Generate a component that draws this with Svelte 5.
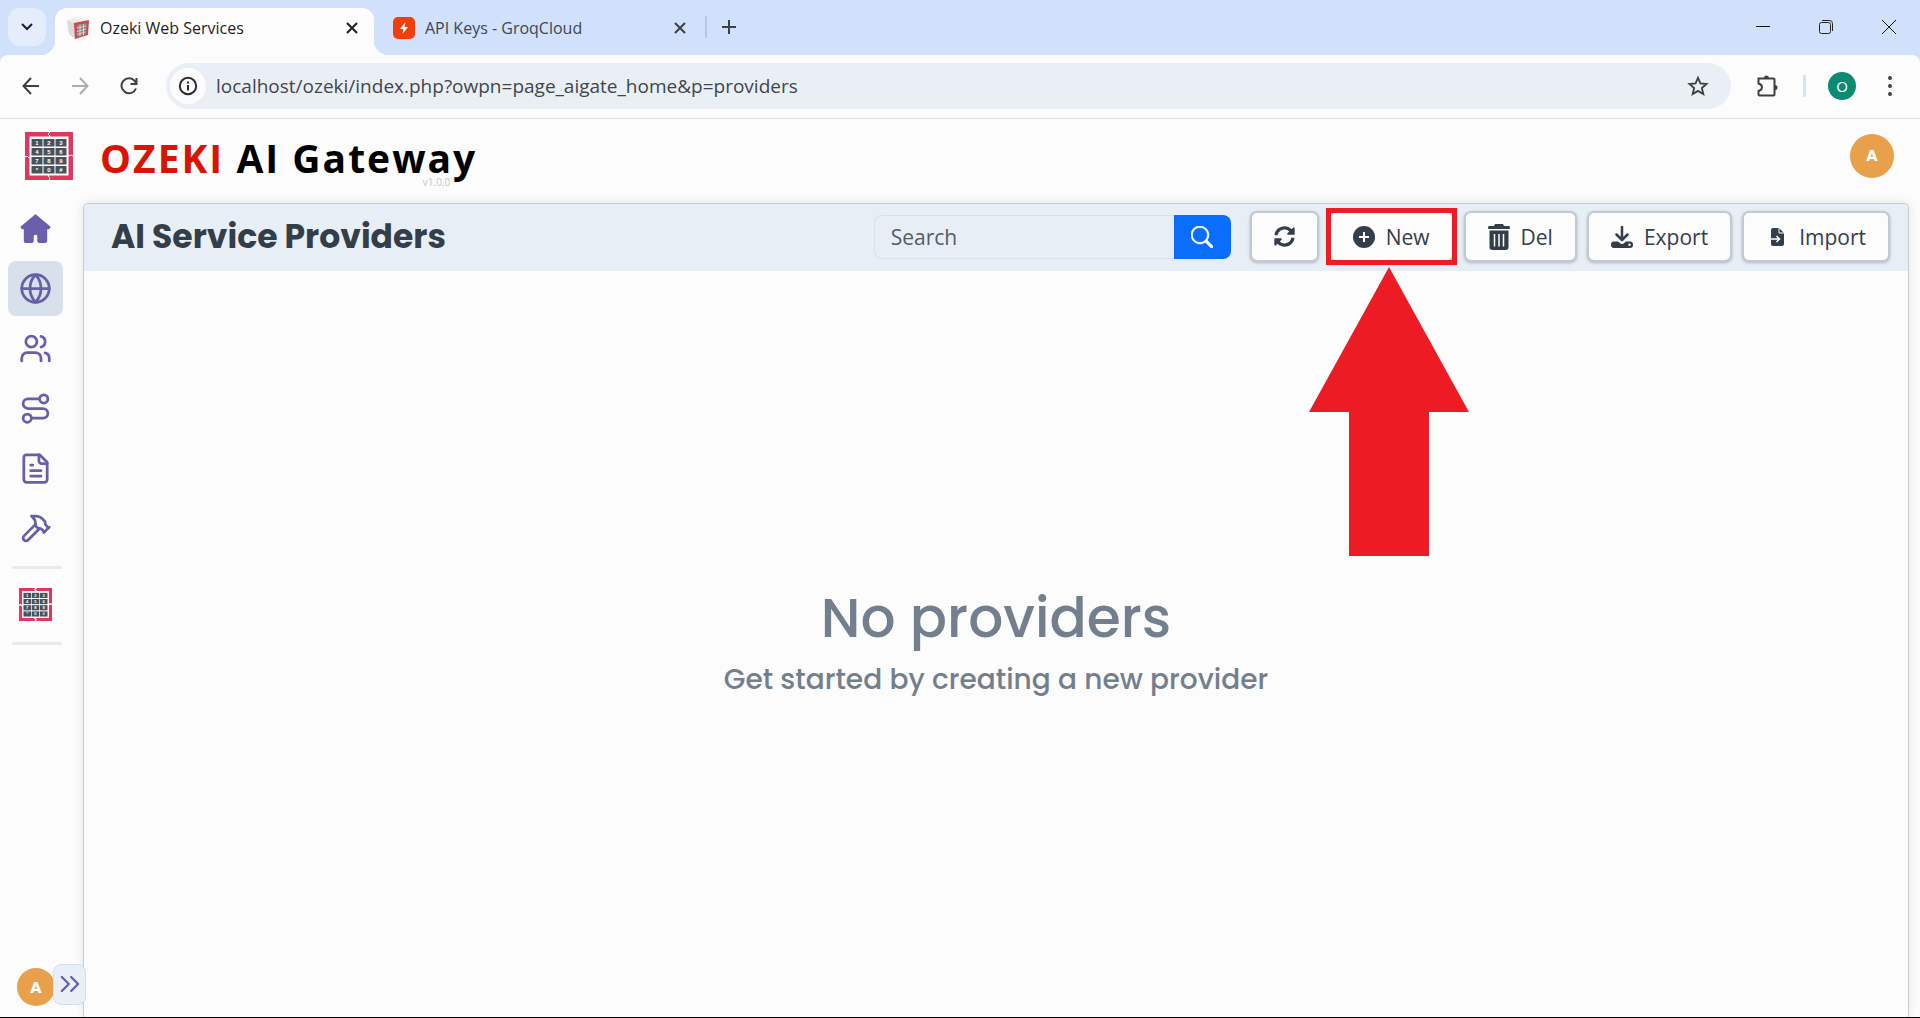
<script lang="ts">
	type NavItem = { name: string; label: string; paths: string[]; circles?: number[][]; solid?: boolean };

	let search = $state("");
	let active = $state("providers");

	const navItems: NavItem[] = [
		{
			name: "home",
			label: "Home",
			solid: true,
			paths: ["M12 2.2 1.6 10.9 2.2 12H4v9q0 1 1 1h4.2q1 0 1-1v-3.6q0-1.4 1.8-1.4t1.8 1.4V21q0 1 1 1H19q1 0 1-1v-9h1.8l.6-1.1z"]
		},
		{
			name: "providers",
			label: "Providers",
			circles: [[12, 12, 10]],
			paths: ["M12 2a14.5 14.5 0 0 0 0 20 14.5 14.5 0 0 0 0-20", "M2 12h20"]
		},
		{
			name: "users",
			label: "Users",
			circles: [[9, 7, 4]],
			paths: ["M16 21v-2a4 4 0 0 0-4-4H6a4 4 0 0 0-4 4v2", "M22 21v-2a4 4 0 0 0-3-3.87", "M16 3.13a4 4 0 0 1 0 7.75"]
		},
		{
			name: "routes",
			label: "Routes",
			circles: [[6, 19, 3], [18, 5, 3]],
			paths: ["M9 19h8.5a3.5 3.5 0 0 0 0-7h-11a3.5 3.5 0 0 1 0-7H15"]
		},
		{
			name: "logs",
			label: "Logs",
			paths: ["M15 2H5.5a2 2 0 0 0-2 2v16a2 2 0 0 0 2 2h13a2 2 0 0 0 2-2V7.5Z", "M14.5 2v4.5a2 2 0 0 0 2 2h4", "M10 9.5H8.500", "M16 13.5H8.500", "M16 17.5H8.500"]
		},
		{
			name: "tools",
			label: "Tools",
			paths: [
				"m15 12-8.373 8.373a1 1 0 1 1-3-3L12 9",
				"m18 15 4-4",
				"m21.5 11.5-1.914-1.914A2 2 0 0 1 19 8.172V7l-2.26-2.26a6 6 0 0 0-4.202-1.756L9 2.96l.92.82A6.18 6.18 0 0 1 12 8.4V10l2 2h1.172a2 2 0 0 1 1.414.586L18.5 14.5"
			]
		}
	];

	const keys = ["1", "2", "3", "4", "5", "6", "7", "8", "9", "*", "0", "#"];
</script>

{#snippet keypad()}
	<svg class="keypad" viewBox="0 0 48 48" aria-hidden="true">
		<rect width="48" height="48" fill="#e0375c" />
		<rect x="4.5" y="4.5" width="39" height="39" fill="#fff" />
		<path d="M25 0l-2 2 2 2-1 1M24 48l1-2-2-2 1-1M0 25l2-1 2 2 1-1M48 24l-2-1-2 1-1-1" fill="none" stroke="#fff" />
		{#each keys as key, i}
			<rect x={6.5 + (i % 3) * 12} y={7 + Math.floor(i / 3) * 9} width="11" height="7.5" fill="#46525e" />
			<text x={12 + (i % 3) * 12} y={12.8 + Math.floor(i / 3) * 9} text-anchor="middle">{key}</text>
		{/each}
	</svg>
{/snippet}

<div class="window">
	<div class="chrome">
		<div class="tab-strip">
			<button class="tab-search" aria-label="Search tabs">
				<svg width="12" height="8" viewBox="0 0 12 8"><path d="m1 1 5 5 5-5" fill="none" stroke="#1f1f1f" stroke-width="2" /></svg>
			</button>
			<div class="tab current">
				<svg width="24" height="24" viewBox="0 0 24 24">
					<path d="M1 4 11 1l12 3-13 3z" fill="#f1efee" />
					<path d="m1 4 8 3v16L3 18z" fill="#dcd9d8" />
					<path d="m8 7 15-3-1 15-13 4z" fill="#d64545" />
					<path d="m10.5 9 10.500-2-1 11-9 3z" fill="#8d8583" />
					<path d="M14 8.500v12M17.500 8v11.500M11 12l9.500-2M11 15.500l9-2.500M11 18.500l8.500-2.500" stroke="#d9cdcb" />
				</svg>
				<span>Ozeki Web Services</span>
				<button aria-label="Close tab">
					<svg width="12" height="12" viewBox="0 0 12 12"><path d="m1 1 10 10M11 1 1 11" stroke="#1f1f1f" stroke-width="2" /></svg>
				</button>
			</div>
			<div class="tab">
				<svg width="22" height="22" viewBox="0 0 22 22">
					<rect width="22" height="22" rx="5" fill="#f43e09" />
					<path d="m12.5 5-5.500 7h3.500l-1 5 5.500-7h-3.500z" fill="#fff" />
				</svg>
				<span>API Keys - GroqCloud</span>
				<button aria-label="Close tab">
					<svg width="12" height="12" viewBox="0 0 12 12"><path d="m1 1 10 10M11 1 1 11" stroke="#3c4043" stroke-width="2" /></svg>
				</button>
			</div>
			<button class="new-tab" aria-label="New tab">
				<svg width="14" height="14" viewBox="0 0 14 14"><path d="M7 0v14M0 7h14" stroke="#3c4043" stroke-width="2" /></svg>
			</button>
			<div class="window-buttons">
				<button aria-label="Minimize">
					<svg width="16" height="16" viewBox="0 0 16 16"><path d="M1 7.5h14" stroke="#111" /></svg>
				</button>
				<button aria-label="Restore">
					<svg width="16" height="16" viewBox="0 0 16 16" fill="none" stroke="#222">
						<rect x="1.5" y="3.5" width="11" height="11" rx="2" />
						<path d="M4 1.5h7.5q3 0 3 3V12" />
					</svg>
				</button>
				<button aria-label="Close">
					<svg width="16" height="16" viewBox="0 0 16 16"><path d="m1 1 14 14M15 1 1 15" stroke="#111" /></svg>
				</button>
			</div>
		</div>

		<div class="toolbar">
			<button aria-label="Back">
				<svg width="18" height="18" viewBox="0 0 18 18" fill="none" stroke="#3c4043" stroke-width="2"><path d="M17 9H2M9 1 1.5 9 9 17" /></svg>
			</button>
			<button aria-label="Forward">
				<svg width="18" height="18" viewBox="0 0 18 18" fill="none" stroke="#a9acb0" stroke-width="2"><path d="M1 9h15M9 1l7.5 8L9 17" /></svg>
			</button>
			<button aria-label="Reload">
				<svg width="18" height="18" viewBox="0 0 18 18" fill="none" stroke="#3c4043" stroke-width="2"><path d="M16 11.5A7.5 7.5 0 1 1 14.8 4L16 6M16.5 1v6H10.5" /></svg>
			</button>
			<div class="address">
				<button class="site-info" aria-label="View site information">
					<svg width="20" height="20" viewBox="0 0 20 20" fill="none" stroke="#2a2c2e" stroke-width="2"><circle cx="10" cy="10" r="8.2" /><path d="M10 9v5.5M10 5.5v2" /></svg>
				</button>
				<input type="text" aria-label="Address" value="localhost/ozeki/index.php?owpn=page_aigate_home&p=providers" />
				<button aria-label="Bookmark this tab">
					<svg width="22" height="22" viewBox="0 0 24 24" fill="none" stroke="#3c4043" stroke-width="2"><path d="m12 3 2.6 6.2 6.7.6-5.1 4.4 1.6 6.6L12 17.3l-5.8 3.5 1.6-6.6-5.1-4.4 6.7-.6z" /></svg>
				</button>
			</div>
			<button class="extensions" aria-label="Extensions">
				<svg width="24" height="24" viewBox="0 0 24 24" fill="none" stroke="#3c4043" stroke-width="2"><path d="M3.5 4.5h15q1 0 1 1v15q0 1-1 1h-14q-1 0-1-1V17q3.5-1 3.5-3.7T3.5 9.5z" /><path d="M9 4a2.5 2.5 0 0 1 5 0zM20 11a2.5 2.5 0 0 1 0 5z" fill="#3c4043" stroke="none" /></svg>
			</button>
			<button class="profile" aria-label="Profile">O</button>
			<button aria-label="Browser menu">
				<svg width="4" height="20" viewBox="0 0 4 20" fill="#3c4043"><circle cx="2" cy="2" r="2" /><circle cx="2" cy="10" r="2" /><circle cx="2" cy="18" r="2" /></svg>
			</button>
		</div>
	</div>

	<header>
		{@render keypad()}
		<h1><span class="brand">OZEKI</span> AI Gateway<small>v1.0.0</small></h1>
		<button class="avatar" aria-label="Account">A</button>
	</header>

	<div class="body">
		<nav>
			{#each navItems as item}
				<a href="#{item.name}" aria-label={item.label} class:active={active === item.name} onclick={() => (active = item.name)}>
					<svg width="33" height="33" viewBox="0 0 24 24" class:solid={item.solid}>
						{#each item.circles ?? [] as [cx, cy, r]}
							<circle {cx} {cy} {r} />
						{/each}
						{#each item.paths as d}
							<path {d} />
						{/each}
					</svg>
				</a>
			{/each}
			<hr />
			<a href="#ozeki" aria-label="Ozeki">{@render keypad()}</a>
			<hr />
			<div class="nav-bottom">
				<button class="avatar small" aria-label="Account">A</button>
				<button class="expand" aria-label="Expand sidebar">
					<svg width="28" height="28" viewBox="0 0 24 24"><path d="m5 18 6-6-6-6M13 18l6-6-6-6" /></svg>
				</button>
			</div>
		</nav>

		<main>
			<div class="panel-head">
				<h2>AI Service Providers</h2>
				<form class="search" onsubmit={(e) => e.preventDefault()}>
					<input type="text" placeholder="Search" aria-label="Search" bind:value={search} />
					<button aria-label="Search">
						<svg width="22" height="22" viewBox="0 0 16 16" fill="#fff" stroke="#fff" stroke-width="0.5"><path d="M11.742 10.344a6.5 6.5 0 1 0-1.397 1.398h-.001c.03.04.062.078.098.115l3.85 3.85a1 1 0 0 0 1.415-1.414l-3.85-3.85a1.007 1.007 0 0 0-.115-.1zM12 6.5a5.5 5.5 0 1 1-11 0 5.5 5.5 0 0 1 11 0z" /></svg>
					</button>
				</form>
				<div class="actions">
					<button class="action" aria-label="Refresh">
						<svg width="21" height="21" viewBox="0 0 512 512"><path d="M370.72 133.28C339.458 104.008 298.888 87.962 255.848 88c-77.458.068-144.328 53.178-162.791 126.85-1.344 5.363-6.122 9.15-11.651 9.15H24.103c-7.498 0-13.194-6.807-11.807-14.176C33.933 94.924 134.813 8 256 8c66.448 0 126.791 26.136 171.315 68.685L463.03 40.97C478.149 25.851 504 36.559 504 57.941V192c0 13.255-10.745 24-24 24H345.941c-21.382 0-32.09-25.851-16.971-40.971l41.75-41.749zM32 296h134.059c21.382 0 32.09 25.851 16.971 40.971l-41.75 41.75c31.262 29.273 71.835 45.319 114.876 45.28 77.418-.07 144.315-53.144 162.787-126.849 1.344-5.363 6.122-9.15 11.651-9.15h57.304c7.498 0 13.194 6.807 11.807 14.176C478.067 417.076 377.187 504 256 504c-66.448 0-126.791-26.136-171.315-68.685L48.97 471.03C33.851 486.149 8 475.441 8 454.059V320c0-13.255 10.745-24 24-24z" /></svg>
					</button>
					<div class="marked">
						<button class="action">
							<svg width="22" height="22" viewBox="0 0 22 22"><circle cx="11" cy="11" r="11" /><path d="M11 6v10M6 11h10" stroke="#fff" stroke-width="2" /></svg>
							New
						</button>
						<svg class="arrow" width="160" height="289" viewBox="0 0 160 289" aria-hidden="true"><path d="M80 0 160 145H120V289H40V145H0z" fill="#ed1c24" /></svg>
					</div>
					<button class="action">
						<svg width="22" height="26" viewBox="0 0 22 26">
							<path d="M7 0h8l1 2h5q1 0 1 1.5T21 5H1Q0 5 0 3.5T1 2h5zM1.5 6.5h19V23q0 3-3 3h-13q-3 0-3-3z" />
							<path d="M6.5 10v12.5M11 10v12.5M15.5 10v12.5" stroke="#fff" stroke-width="1.5" />
						</svg>
						Del
					</button>
					<button class="action">
						<svg width="22" height="22" viewBox="0 0 22 22">
							<path d="M11 1v12M5.5 8.500l5.500 5.500 5.500-5.500" fill="none" stroke="#343e48" stroke-width="2.500" stroke-linecap="round" stroke-linejoin="round" />
							<path d="M3 15.500h4l2.500 2q1.500 1 3 0l2.500-2H19a3 3 0 0 1 3 3v.5a3 3 0 0 1-3 3H3a3 3 0 0 1-3-3v-.5a3 3 0 0 1 3-3z" />
							<circle cx="18.5" cy="18.7" r="1.2" fill="#fff" />
						</svg>
						Export
					</button>
					<button class="action">
						<svg width="22" height="18" viewBox="0 0 22 18">
							<path d="M7 0h6l5 5v11q0 2-2 2H7q-2 0-2-2V2q0-2 2-2z" />
							<path d="M13 0v5h5" fill="none" stroke="#fff" />
							<path d="M4 11h9M10.5 8l3 3-3 3" fill="none" stroke="#fff" stroke-width="1.5" />
						</svg>
						Import
					</button>
				</div>
			</div>
			<div class="empty">
				<h3>No providers</h3>
				<p>Get started by creating a new provider</p>
			</div>
		</main>
	</div>
</div>

<style>
	:global(body) {
		background: #fcfdfd;
	}
	* {
		box-sizing: border-box;
	}
	.window {
		display: flex;
		flex-direction: column;
		min-height: 100vh;
		border-bottom: 1px solid #000;
		background: #fcfcfd;
		font-family: "Segoe UI", "Open Sans", sans-serif;
		color: #343e48;
	}
	button {
		display: flex;
		align-items: center;
		justify-content: center;
		padding: 0;
		border: none;
		background: none;
		font: inherit;
		color: inherit;
		cursor: pointer;
	}
	input {
		min-width: 0;
		border: none;
		outline: none;
		background: none;
		font: inherit;
	}
	svg {
		display: block;
		flex: none;
	}
	h1,
	h2,
	h3,
	p {
		margin: 0;
	}

	/* browser frame */
	.chrome {
		background: #d2e1fb;
	}
	.tab-strip {
		display: flex;
		align-items: stretch;
		height: 55px;
		padding: 8px 0 0 8px;
	}
	.tab-search {
		width: 38px;
		height: 38px;
		margin-right: 9px;
		border-radius: 12px;
		background: #e5edfc;
	}
	.tab {
		position: relative;
		display: flex;
		align-items: center;
		gap: 10px;
		width: 319px;
		padding: 0 16px 8px 11px;
		font-size: 16px;
		color: #3c4752;
	}
	.tab span {
		flex: 1;
	}
	.tab + .tab {
		width: 331px;
		padding: 0 19px 8px 19px;
	}
	.tab.current {
		border-radius: 12px 12px 0 0;
		background: #fcfcfd;
		color: #1f1f1f;
	}
	.tab.current::before,
	.tab.current::after {
		content: "";
		position: absolute;
		bottom: 0;
		width: 14px;
		height: 14px;
	}
	.tab.current::before {
		right: 100%;
		background: radial-gradient(circle at 0 0, transparent 14px, #fcfcfd 14px);
	}
	.tab.current::after {
		left: 100%;
		background: radial-gradient(circle at 100% 0, transparent 14px, #fcfcfd 14px);
	}
	.new-tab {
		width: 46px;
		height: 22px;
		margin-top: 8px;
		border-left: 2px solid #b4c8ea;
	}
	.window-buttons {
		display: flex;
		margin-left: auto;
	}
	.window-buttons button {
		width: 63px;
		height: 38px;
	}
	.toolbar {
		display: flex;
		align-items: center;
		height: 64px;
		padding: 0 16px 1px 6px;
		border-bottom: 1px solid #dfe1e2;
		border-radius: 8px 8px 0 0;
		background: #fcfcfd;
	}
	.toolbar > button {
		width: 49px;
		height: 40px;
	}
	.address {
		display: flex;
		flex: 1;
		align-items: center;
		height: 46px;
		margin-left: 13px;
		padding: 0 22px 0 4px;
		border-radius: 23px;
		background: #e9eff5;
	}
	.address input {
		flex: 1;
		padding: 0 10px;
		font-size: 19px;
		color: #3f464d;
	}
	.site-info {
		width: 36px;
		height: 36px;
		border-radius: 50%;
		background: #fcfcfd;
	}
	.toolbar > .extensions {
		width: 75px;
		height: 22px;
		border-right: 3px solid #d5e3f7;
	}
	.toolbar > .profile {
		width: 28px;
		height: 28px;
		margin: 0 20px 0 22px;
		border-radius: 50%;
		background: #0b8a74;
		font-size: 15px;
		color: #fff;
	}
	.toolbar > .profile + button {
		width: 28px;
	}

	/* application */
	header {
		display: flex;
		align-items: center;
		height: 81px;
		padding: 0 26px 8px 25px;
	}
	.keypad {
		width: 48px;
		height: 48px;
	}
	.keypad text {
		font: bold 6px "Liberation Sans", sans-serif;
		fill: #fff;
	}
	h1 {
		position: relative;
		margin: 4px 0 0 27px;
		font-size: 39px;
		line-height: 48px;
		letter-spacing: 2px;
		color: #000;
	}
	.brand {
		color: #d81405;
	}
	h1 small {
		position: absolute;
		right: 27px;
		top: 42px;
		font-size: 10px;
		line-height: 12px;
		font-weight: 400;
		letter-spacing: 0;
		color: #c4c4c4;
	}
	.avatar {
		flex: none;
		width: 44px;
		height: 44px;
		border-radius: 50%;
		background: #e8a04a;
		font-family: "Poppins", "Inter", sans-serif;
		font-size: 16px;
		font-weight: 700;
		color: #fff;
	}
	header .avatar {
		margin-left: auto;
	}
	.body {
		display: flex;
		flex: 1;
	}
	nav {
		display: flex;
		flex-direction: column;
		gap: 5px;
		width: 83px;
		padding: 1px 0 0 8px;
	}
	nav a {
		display: flex;
		align-items: center;
		justify-content: center;
		width: 55px;
		height: 55px;
		border-radius: 8px;
	}
	nav a.active {
		background: #d8e1eb;
	}
	nav svg {
		fill: none;
		stroke: #6760a6;
		stroke-width: 2;
		stroke-linecap: round;
		stroke-linejoin: round;
	}
	nav svg.solid {
		fill: #6b5fac;
		stroke-width: 1;
	}
	nav a .keypad {
		width: 33px;
		height: 33px;
		stroke: none;
	}
	hr {
		width: 50px;
		height: 3px;
		margin: 5px 0 3px 4px;
		border: none;
		border-radius: 2px;
		background: #e9eaea;
	}
	.nav-bottom {
		display: flex;
		align-items: center;
		margin-top: auto;
		padding: 0 0 11px 9px;
	}
	.avatar.small {
		width: 38px;
		height: 38px;
		margin-top: 6px;
	}
	.expand {
		z-index: 1;
		flex: none;
		width: 33px;
		height: 41px;
		margin-left: -2px;
		border: 1px solid #d3dde8;
		border-radius: 8px;
		background: #e9eff7;
	}
	main {
		display: flex;
		flex: 1;
		flex-direction: column;
		margin: 3px 11px 0 0;
		border: 1px solid #c9ccd0;
		border-bottom: none;
		border-radius: 5px 5px 0 0;
		box-shadow: 0 0 10px rgba(0, 0, 0, 0.1);
	}
	.panel-head {
		display: flex;
		align-items: center;
		height: 67px;
		padding: 0 18px 2px 27px;
		border-radius: 4px 4px 0 0;
		background: #e8eef6;
	}
	h2 {
		font-family: "Poppins", "Inter", sans-serif;
		font-size: 33px;
		line-height: 40px;
		font-weight: 700;
	}
	.search {
		display: flex;
		width: 357px;
		height: 44px;
		margin-left: auto;
		font-size: 21px;
	}
	.search input {
		flex: 1;
		padding: 0 16px;
		border: 1px solid #dbe1e8;
		border-right: none;
		border-radius: 8px 0 0 8px;
	}
	.search input::placeholder {
		color: #545c64;
		opacity: 1;
	}
	.search button {
		width: 57px;
		border-radius: 0 8px 8px 0;
		background: #0b6dfb;
	}
	.actions {
		display: flex;
		gap: 10px;
		margin-left: 19px;
	}
	.action {
		gap: 11px;
		height: 51px;
		padding: 0 22px;
		border: 2px solid #c3c9d1;
		border-radius: 7px;
		background: #fcfcfd;
		box-shadow: 0 1px 3px rgba(40, 50, 70, 0.3);
		font-size: 21px;
		font-weight: 500;
	}
	.action svg {
		fill: #343e48;
	}
	.marked {
		position: relative;
	}
	.marked::after {
		content: "";
		position: absolute;
		inset: -3px;
		border: 5px solid #ed1c24;
		pointer-events: none;
	}
	.arrow {
		position: absolute;
		top: 100%;
		left: 50%;
		margin: 5px 0 0 -82px;
		pointer-events: none;
	}
	.empty {
		display: flex;
		flex: 1;
		flex-direction: column;
		align-items: center;
		justify-content: center;
		gap: 5px;
		padding-bottom: 5px;
		font-family: "Poppins", "Inter", sans-serif;
		font-weight: 500;
		color: #737f8d;
	}
	h3 {
		font-size: 55px;
		line-height: 72px;
		font-weight: 500;
	}
	.empty p {
		font-size: 28px;
		line-height: 42px;
	}
</style>
